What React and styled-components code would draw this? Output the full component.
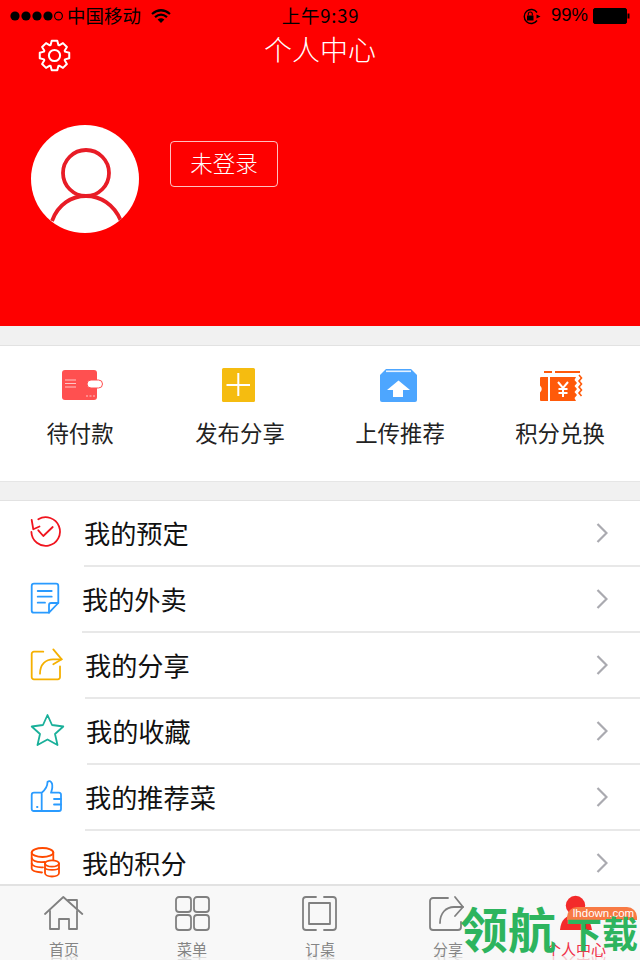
import React from 'react';
import styled, { createGlobalStyle } from 'styled-components';

const FONT = '"Noto Sans CJK SC", "Liberation Sans", sans-serif';

const Global = createGlobalStyle`
  html, body { margin: 0; padding: 0; background: #fff; }
  body { font-family: ${FONT}; }
  * { box-sizing: border-box; }
`;

const Page = styled.div`
  position: relative;
  width: 640px;
  height: 960px;
  overflow: hidden;
  display: flex;
  flex-direction: column;
  background: #fff;
`;

const Header = styled.header`
  height: 326px;
  flex: none;
  background: #fe0000;
`;

const StatusBar = styled.div`
  height: 32px;
  display: grid;
  grid-template-columns: 1fr auto 1fr;
  align-items: center;
  padding: 0 9px 0 10px;
  color: #000;
  font-size: 18.5px;
  line-height: 32px;
`;

const StatusLeft = styled.div`
  display: flex;
  align-items: center;
`;

const StatusRight = styled.div`
  display: flex;
  align-items: center;
  justify-content: flex-end;
`;

const Dots = styled.svg`
  flex: none;
  margin-right: 3px;
`;

const Carrier = styled.span`
  margin: -2px 10px 0 0;
`;

const Clock = styled.span`
  margin-top: -2px;
  font-size: 18.5px;
  letter-spacing: 0.8px;
`;

const Percent = styled.span`
  font-family: "Liberation Sans", sans-serif;
  margin: -2px 5px 0 10px;
`;

const NavBar = styled.div`
  height: 42px;
  display: grid;
  grid-template-columns: 1fr auto 1fr;
  align-items: center;
`;

const NavTitle = styled.h1`
  margin: -8px 0 0;
  color: #fff;
  font-size: 28px;
  font-weight: 300;
  line-height: 40px;
`;

const GearButton = styled.span`
  display: flex;
  margin-top: 4px;
  padding-left: 38px;
`;

const Profile = styled.div`
  display: flex;
  align-items: flex-start;
  gap: 31px;
  padding: 51px 0 0 31px;
`;

const Avatar = styled.div`
  width: 108px;
  height: 108px;
  border-radius: 50%;
  background: #fff;
  overflow: hidden;
  flex: none;
`;

const LoginButton = styled.div`
  width: 108px;
  height: 46px;
  margin-top: 16px;
  padding-bottom: 4px;
  border: 1px solid rgba(255, 255, 255, 0.75);
  border-radius: 4px;
  color: #fff;
  font-size: 22.5px;
  font-weight: 300;
  display: flex;
  align-items: center;
  justify-content: center;
`;

const Band = styled.div`
  height: 20px;
  flex: none;
  background: #f1f1f1;
  border-bottom: 1px solid #e2e2e2;
  border-top: ${p => (p.$top ? '1px solid #e6e6e6' : '0')};
`;

const Shortcuts = styled.section`
  height: 135px;
  flex: none;
  display: grid;
  grid-template-columns: repeat(4, 1fr);
`;

const Shortcut = styled.div`
  display: flex;
  flex-direction: column;
  align-items: center;
  padding-top: 19px;
`;

const ShortcutLabel = styled.span`
  margin-top: 8px;
  color: #222;
  font-size: 22.4px;
  line-height: 38px;
`;

const List = styled.section`
  flex: 1;
  min-height: 0;
  overflow: hidden;
`;

const Row = styled.div`
  position: relative;
  height: 66px;
  display: flex;
  align-items: center;
  padding: 0 32px 0 26px;
`;

const RowRule = styled.i`
  position: absolute;
  left: ${p => p.$inset}px;
  right: 0;
  bottom: 0;
  height: 2px;
  background: #e8e8e8;
`;

const RowIcon = styled.svg`
  flex: none;
  margin-top: -4px;
`;

const RowLabel = styled.span`
  flex: 1;
  margin: -2px 0 0 ${p => p.$offset - 1}px;
  color: #111;
  font-size: 26.2px;
  line-height: 40px;
`;

const Chevron = styled.svg`
  flex: none;
  margin-top: -2px;
`;

const TabBar = styled.nav`
  height: 76px;
  flex: none;
  background: #f8f8f8;
  border-top: 2px solid #e2e2e2;
  display: grid;
  grid-template-columns: repeat(5, 128px);
  overflow: hidden;
`;

const Tab = styled.div`
  display: flex;
  flex-direction: column;
  align-items: center;
  padding-top: 9px;
  color: ${p => (p.$active ? '#f0304a' : '#858585')};
`;

const TabLabel = styled.span`
  font-size: 15px;
  line-height: 18px;
  margin-top: 8px;
`;

const TabMirror = styled.span`
  font-size: 15px;
  line-height: 18px;
  margin-top: -5px;
  opacity: 0.25;
  transform: scaleY(-1);
`;

const Watermark = styled.div`
  position: absolute;
  left: 460px;
  top: 897px;
  height: 60px;
  display: flex;
  align-items: center;
  color: #2db45e;
  font-weight: 700;
  white-space: nowrap;
`;

const WatermarkBig = styled.span`
  font-size: 48px;
  line-height: 60px;
  margin-right: 10px;
`;

const WatermarkSmall = styled.span`
  font-size: 36px;
  line-height: 60px;
  margin-top: 10px;
`;

const WatermarkPill = styled.div`
  position: absolute;
  left: 567px;
  top: 907px;
  width: 70px;
  height: 13px;
  background: #f87a44;
  border-radius: 10px 10px 0 0;
  color: #fff;
  font-family: "Liberation Sans", sans-serif;
  font-size: 11.5px;
  line-height: 13px;
  text-align: center;
  padding-left: 3px;
  white-space: nowrap;
`;

/* computed 8-tooth gear outline */
const gearPath = (() => {
  const c = 16.5, R = 15, r = 11.2, teeth = 8;
  const pts = [];
  for (let i = 0; i < teeth; i++) {
    const a = (i * 2 * Math.PI) / teeth - Math.PI / 2;
    const s = Math.PI / teeth;
    [[-0.95, r], [-0.5, R], [0.5, R], [0.95, r]].forEach(([k, rad]) => {
      const t = a + k * s * 0.95;
      pts.push(`${(c + rad * Math.cos(t)).toFixed(2)} ${(c + rad * Math.sin(t)).toFixed(2)}`);
    });
  }
  return 'M' + pts.join('L') + 'Z';
})();

const SignalDots = () => (
  <Dots width="54" height="12" viewBox="0 0 54 12">
    {[5, 16, 27, 38].map(x => <circle key={x} cx={x} cy="6" r="4.6" fill="#000" />)}
    <circle cx="48.5" cy="6" r="3.9" fill="none" stroke="#000" strokeWidth="1.1" />
  </Dots>
);

const Wifi = () => (
  <svg width="20" height="14" viewBox="0 0 20 14">
    <path d="M1 5 Q10 -2.5 19 5" fill="none" stroke="#000" strokeWidth="2.2" />
    <path d="M4 8.2 Q10 3.2 16 8.2" fill="none" stroke="#000" strokeWidth="2.2" />
    <path d="M6.6 10.6 Q10 8 13.4 10.6 L10 14 Z" fill="#000" />
  </svg>
);

const RotationLock = () => (
  <svg width="19" height="17" viewBox="0 0 19 17">
    <path d="M15 12.5 A7 7 0 1 1 15 4.5" fill="none" stroke="#000" strokeWidth="1.4" />
    <path d="M14.5 6.5 L18.5 8.5 L14.5 10.5 Z" fill="#000" />
    <rect x="5" y="7.5" width="6.5" height="5" fill="#000" />
    <path d="M6.3 7.5 V6 a2 2 0 0 1 4 0 V7.5" fill="none" stroke="#000" strokeWidth="1.1" />
  </svg>
);

const Battery = () => (
  <svg width="38" height="16" viewBox="0 0 38 16">
    <rect x="0.5" y="0.5" width="33" height="15" rx="1.5" fill="#000" stroke="#000" />
    <rect x="34.5" y="5.5" width="2" height="5" fill="#000" />
  </svg>
);

const Gear = () => (
  <svg width="33" height="33" viewBox="0 0 33 33" fill="none" stroke="#fff" strokeWidth="2" strokeLinejoin="round">
    <path d={gearPath} />
    <circle cx="16.5" cy="16.5" r="5.6" />
  </svg>
);

const AvatarArt = () => (
  <svg width="108" height="108" viewBox="0 0 108 108" fill="none" stroke="#e81c26" strokeWidth="3.8">
    <circle cx="55" cy="48" r="23" />
    <path d="M21 96 C27 79 41 71 55 71 C69 71 83 79 90 96" />
  </svg>
);

const WalletIcon = () => (
  <svg width="48" height="40" viewBox="0 0 48 40">
    <rect x="6" y="5" width="35" height="30" rx="3" fill="#ff5050" />
    <rect x="31" y="15" width="15.5" height="8" rx="4" fill="#fff" stroke="#ff5050" />
    <path d="M9 15 H20 M9 18.5 H20 M9 22 H20" stroke="#ffc4c4" strokeWidth="1.2" />
    <path d="M30 31 H32 M33.5 31 H35.5 M37 31 H39" stroke="#ffc4c4" strokeWidth="1.2" />
  </svg>
);

const PlusIcon = () => (
  <svg width="48" height="40" viewBox="0 0 48 40">
    <rect x="6" y="3" width="33" height="34" rx="1.5" fill="#f5bc10" />
    <path d="M10.5 20 H34 M22.3 8 V31" stroke="#fff" strokeWidth="2" />
  </svg>
);

const UploadIcon = () => (
  <svg width="48" height="40" viewBox="0 0 48 40">
    <path d="M10 4 H35 L41 10 V35 Q41 37 39 37 H6 Q4 37 4 35 V10 Z" fill="#4da6ff" />
    <path d="M10 6.3 H35" stroke="#e4f1ff" strokeWidth="1.6" />
    <path d="M22.5 15.5 L34 25 H27 V32 H17 V25 H11 Z" fill="#fff" />
  </svg>
);

const TicketIcon = () => (
  <svg width="48" height="40" viewBox="0 0 48 40">
    <path d="M5 12 H12 V36 H5 Q4 36 4 35 V27.5 Q7.5 24 4 20.5 V13 Q4 12 5 12 Z" fill="#ff5a0a" />
    <path d="M14 12 H40 L38.5 15 L41 18 L38.5 21 L41 24 L38.5 27 L41 30 L38.5 33 L40 36 H14 Z" fill="#ff5a0a" />
    <path d="M8 7 H16 M19 7 H44" stroke="#ff5a0a" strokeWidth="2" />
    <path d="M43 10 L45.5 13 L43 16 L45.5 19 L43 22 L45.5 25 L43 28 L45.5 31" fill="none" stroke="#ff5a0a" strokeWidth="1.6" />
    <path d="M22 17 L27 23 L32 17 M27 23 V32 M22.5 24 H31.5 M22.5 28 H31.5" fill="none" stroke="#fff" strokeWidth="2" />
  </svg>
);

const ListSvg = ({ color, children }) => (
  <RowIcon width="40" height="40" viewBox="0 0 40 40" fill="none" stroke={color} strokeWidth="1.8" strokeLinecap="round" strokeLinejoin="round">
    {children}
  </RowIcon>
);

const rows = [
  {
    label: '我的预定', inset: 84, offset: 19,
    icon: (
      <ListSvg color="#f0141e">
        <path d="M12.3 7.3 A14.3 14.3 0 1 1 5.4 20" />
        <path d="M5.7 8 L7.3 17.3 L13.5 14.5" />
        <path d="M12.3 18.3 L17.3 24 L26.7 15" />
      </ListSvg>
    ),
  },
  {
    label: '我的外卖', inset: 82, offset: 17,
    icon: (
      <ListSvg color="#2a9bff">
        <path d="M8 5.7 H30 A2.3 2.3 0 0 1 32.3 8 V25 L23 34.7 H8 A2.3 2.3 0 0 1 5.7 32.4 V8 A2.3 2.3 0 0 1 8 5.7 Z" />
        <path d="M32.3 25 H25 A2 2 0 0 0 23 27 V34.7" />
        <path d="M11.7 13 H25.7 M11.7 18.7 H25.7 M11.7 24.7 H19" />
      </ListSvg>
    ),
  },
  {
    label: '我的分享', inset: 85, offset: 20,
    icon: (
      <ListSvg color="#f5b000">
        <path d="M17.3 7.7 H8 A2.2 2.2 0 0 0 5.7 10 V33 A2.2 2.2 0 0 0 8 35.3 H31.8 A2.2 2.2 0 0 0 34 33 V22.5" />
        <path d="M14 29.7 C14 20 20 15.3 27 15.3 H35.7" />
        <path d="M27.3 5.4 L35.7 15.3 L27.3 20.3" />
      </ListSvg>
    ),
  },
  {
    label: '我的收藏', inset: 87, offset: 21,
    icon: (
      <ListSvg color="#1ab09a">
        <path d="M21.5 5 L26 15 L37.3 16.5 L29 24 L31.5 35 L21.5 29.5 L11.5 35 L14 24 L5.7 16.5 L17 15 Z" />
      </ListSvg>
    ),
  },
  {
    label: '我的推荐菜', inset: 85, offset: 20,
    icon: (
      <ListSvg color="#2a9bff">
        <path d="M15.7 16.7 H8 A2.3 2.3 0 0 0 5.7 19 V33 A2 2 0 0 0 8 35 H33 A2 2 0 0 0 35 33 V19 A2 2 0 0 0 33 16.7 H25 Q27 11 26 7.5 Q24 3.5 21.5 6 Q21.5 12 15.7 16.7 V35" />
        <path d="M28 23 H35 M28 28.5 H35" />
        <path d="M11 31 H11.5" />
      </ListSvg>
    ),
  },
  {
    label: '我的积分', inset: 82, offset: 17,
    icon: (
      <ListSvg color="#ff4a00">
        <ellipse cx="16.5" cy="10.5" rx="10.8" ry="4.5" />
        <path d="M5.7 10.5 V26.5 C5.7 28.5 10 30 16 30.5" />
        <path d="M27.3 10.5 V18" />
        <path d="M5.7 16 C6.5 19 12 20.5 19 20 M5.7 21.5 C7 24.5 12 25.5 17 25.3" />
        <ellipse cx="26" cy="21.5" rx="7" ry="3.2" />
        <path d="M19 21.5 V31 C19 33 22 34.5 26 34.5 C30 34.5 33 33 33 31 V21.5" />
        <path d="M19 26 C20 28.5 32 28.5 33 26" />
      </ListSvg>
    ),
  },
];

const RowChevron = () => (
  <Chevron width="12" height="20" viewBox="0 0 12 20" fill="none" stroke="#aaaab0" strokeWidth="2.2">
    <path d="M1.5 1 L10.5 10 L1.5 19" />
  </Chevron>
);

const TabSvg = ({ children }) => (
  <svg width="40" height="37" viewBox="0 0 40 37" fill="none" stroke="#808080" strokeWidth="1.8" strokeLinecap="round" strokeLinejoin="round">
    {children}
  </svg>
);

const tabs = [
  {
    label: '首页',
    icon: (
      <TabSvg>
        <path d="M1 19 L19.3 2 L38.3 19" />
        <path d="M24 5 H33 V14" />
        <path d="M6 16 V34 H15 V24 H25 V34 H33 V16" />
      </TabSvg>
    ),
  },
  {
    label: '菜单',
    icon: (
      <TabSvg>
        <rect x="4" y="2" width="15" height="15" rx="3" />
        <rect x="22" y="2" width="15" height="15" rx="3" />
        <rect x="4" y="20" width="15" height="15" rx="3" />
        <rect x="22" y="20" width="15" height="15" rx="3" />
      </TabSvg>
    ),
  },
  {
    label: '订桌',
    icon: (
      <TabSvg>
        <path d="M16 2 H6 A3 3 0 0 0 3 5 V32 A3 3 0 0 0 6 35 H16" />
        <path d="M24 2 H33 A3 3 0 0 1 36 5 V32 A3 3 0 0 1 33 35 H24" />
        <rect x="9" y="8" width="21" height="21" />
      </TabSvg>
    ),
  },
  {
    label: '分享',
    icon: (
      <TabSvg>
        <path d="M20 3 H5 A3 3 0 0 0 2 6 V32 A3 3 0 0 0 5 35 H30 A3 3 0 0 0 33 32 V27" />
        <path d="M12 28 C12 18 18 12 26 12 H35" />
        <path d="M27 2 L35 12 L27 21" />
      </TabSvg>
    ),
  },
  {
    label: '个人中心',
    active: true,
    icon: (
      <svg width="40" height="37" viewBox="0 0 40 37">
        <circle cx="19.5" cy="10.5" r="9.7" fill="#f32a2a" />
        <path d="M4 35 Q5 20 19.5 20 Q34 20 36 35 Z" fill="#f32a2a" />
      </svg>
    ),
  },
];

export default function App() {
  return (
    <Page>
      <Global />
      <Header>
        <StatusBar>
          <StatusLeft>
            <SignalDots />
            <Carrier>中国移动</Carrier>
            <Wifi />
          </StatusLeft>
          <Clock>上午9:39</Clock>
          <StatusRight>
            <RotationLock />
            <Percent>99%</Percent>
            <Battery />
          </StatusRight>
        </StatusBar>
        <NavBar>
          <GearButton><Gear /></GearButton>
          <NavTitle>个人中心</NavTitle>
          <span />
        </NavBar>
        <Profile>
          <Avatar><AvatarArt /></Avatar>
          <LoginButton>未登录</LoginButton>
        </Profile>
      </Header>
      <Band />
      <Shortcuts>
        <Shortcut><WalletIcon /><ShortcutLabel>待付款</ShortcutLabel></Shortcut>
        <Shortcut><PlusIcon /><ShortcutLabel>发布分享</ShortcutLabel></Shortcut>
        <Shortcut><UploadIcon /><ShortcutLabel>上传推荐</ShortcutLabel></Shortcut>
        <Shortcut><TicketIcon /><ShortcutLabel>积分兑换</ShortcutLabel></Shortcut>
      </Shortcuts>
      <Band $top />
      <List>
        {rows.map((r, i) => (
          <Row key={r.label}>
            {r.icon}
            <RowLabel $offset={r.offset}>{r.label}</RowLabel>
            <RowChevron />
            {i < rows.length - 1 && <RowRule $inset={r.inset} />}
          </Row>
        ))}
      </List>
      <TabBar>
        {tabs.map(t => (
          <Tab key={t.label} $active={t.active}>
            {t.icon}
            <TabLabel>{t.label}</TabLabel>
            <TabMirror aria-hidden="true">{t.label}</TabMirror>
          </Tab>
        ))}
      </TabBar>
      <WatermarkPill>lhdown.com</WatermarkPill>
      <Watermark>
        <WatermarkBig>领航</WatermarkBig>
        <WatermarkSmall>下载</WatermarkSmall>
      </Watermark>
    </Page>
  );
}
